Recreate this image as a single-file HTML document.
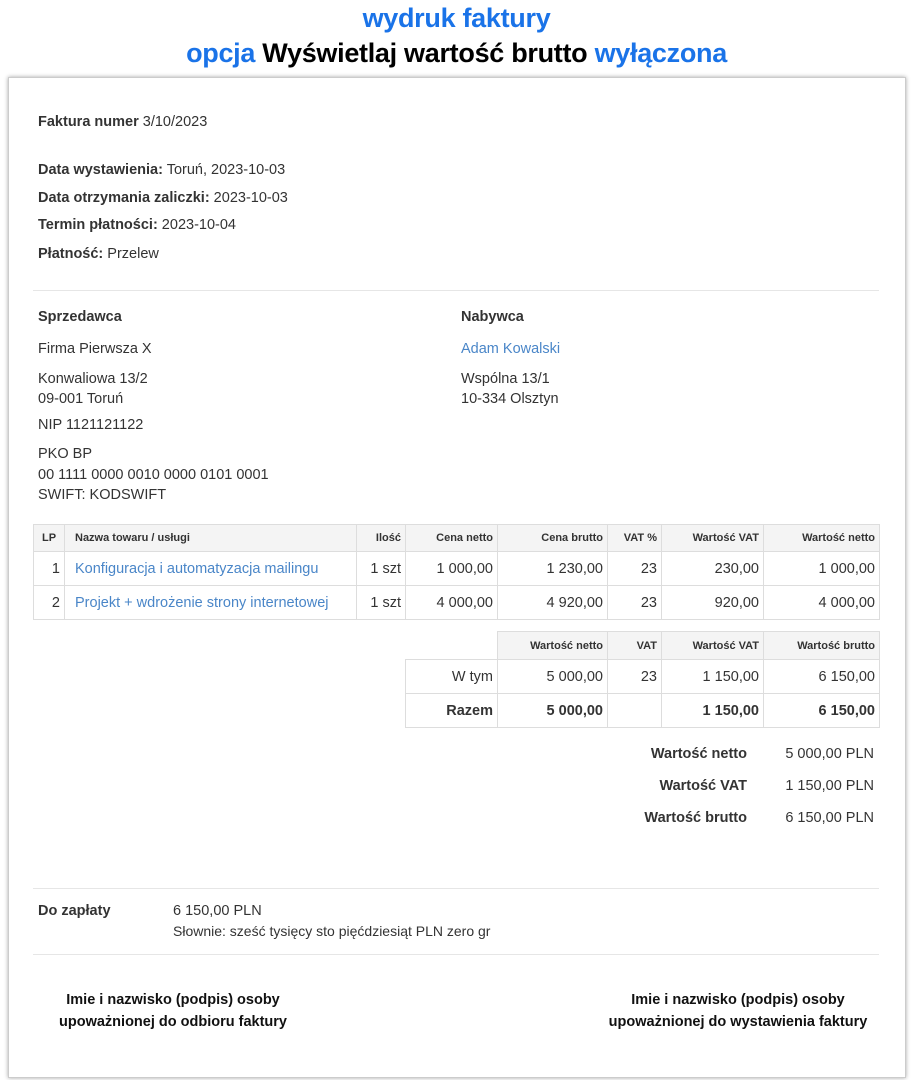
<!DOCTYPE html>
<html><head><meta charset="utf-8"><style>
*{margin:0;padding:0;box-sizing:border-box}
body{width:913px;height:1080px;background:#fff;font-family:"Liberation Sans",Arial,sans-serif;color:#333;font-size:14.5px;position:relative;overflow:hidden}
.t{position:absolute;white-space:nowrap}
.title{position:absolute;left:0;width:913px;text-align:center;font-weight:bold;font-size:27px;letter-spacing:-0.3px;color:#000}
.bl{color:#1a73e8}
.paper{position:absolute;left:8px;top:77px;width:898px;height:1001px;border:1px solid #ccc;box-shadow:0 0 4px rgba(0,0,0,.35);background:#fff}
b{font-weight:bold;color:#333}
.hr{position:absolute;left:33px;width:846px;height:1px;background:#e6e6e6}
table{position:absolute;border-collapse:collapse}
td,th{border:1px solid #ddd;padding:0 4px;text-align:right;font-size:14.5px}
th{background:#f4f4f4;font-size:11px;font-weight:bold;color:#333}
a{color:#4a86c8;text-decoration:none}
.sig{position:absolute;text-align:center;font-weight:bold;color:#111;line-height:22px;font-size:14.5px}
</style></head><body>
<div class="title bl" style="top:3px">wydruk faktury</div>
<div class="title" style="top:38px"><span class="bl">opcja</span> Wyświetlaj wartość brutto <span class="bl">wyłączona</span></div>
<div class="paper"></div>

<div class="t" style="left:38px;top:114px"><b>Faktura numer</b> 3/10/2023</div>
<div class="t" style="left:38px;top:162px"><b>Data wystawienia:</b> Toruń, 2023-10-03</div>
<div class="t" style="left:38px;top:190px"><b>Data otrzymania zaliczki:</b> 2023-10-03</div>
<div class="t" style="left:38px;top:217px"><b>Termin płatności:</b> 2023-10-04</div>
<div class="t" style="left:38px;top:246px"><b>Płatność:</b> Przelew</div>
<div class="hr" style="top:290px"></div>

<div class="t" style="left:38px;top:309px"><b>Sprzedawca</b></div>
<div class="t" style="left:38px;top:341px">Firma Pierwsza X</div>
<div class="t" style="left:38px;top:369px;line-height:20px">Konwaliowa 13/2<br>09-001 Toruń</div>
<div class="t" style="left:38px;top:417px">NIP 1121121122</div>
<div class="t" style="left:38px;top:444px;line-height:20.5px">PKO BP<br>00 1111 0000 0010 0000 0101 0001<br>SWIFT: KODSWIFT</div>

<div class="t" style="left:461px;top:309px"><b>Nabywca</b></div>
<div class="t" style="left:461px;top:341px"><a>Adam Kowalski</a></div>
<div class="t" style="left:461px;top:369px;line-height:20px">Wspólna 13/1<br>10-334 Olsztyn</div>

<table style="left:33px;top:524px;width:847px">
<tr style="height:27px"><th style="width:31px;text-align:center">LP</th><th style="width:292px;text-align:left;padding-left:10px">Nazwa towaru / usługi</th><th style="width:49px">Ilość</th><th style="width:92px">Cena netto</th><th style="width:110px">Cena brutto</th><th style="width:54px">VAT %</th><th style="width:102px">Wartość VAT</th><th>Wartość netto</th></tr>
<tr style="height:34px"><td>1</td><td style="text-align:left;padding-left:10px"><a>Konfiguracja i automatyzacja mailingu</a></td><td>1 szt</td><td>1 000,00</td><td>1 230,00</td><td>23</td><td>230,00</td><td>1 000,00</td></tr>
<tr style="height:34px"><td>2</td><td style="text-align:left;padding-left:10px"><a>Projekt + wdrożenie strony internetowej</a></td><td>1 szt</td><td>4 000,00</td><td>4 920,00</td><td>23</td><td>920,00</td><td>4 000,00</td></tr>
</table>

<table style="left:405px;top:631px;width:475px">
<tr style="height:28px"><td style="border:none;border-bottom:1px solid #ddd;width:92px"></td><th style="width:110px">Wartość netto</th><th style="width:54px">VAT</th><th style="width:102px">Wartość VAT</th><th>Wartość brutto</th></tr>
<tr style="height:34px"><td>W tym</td><td>5 000,00</td><td>23</td><td>1 150,00</td><td>6 150,00</td></tr>
<tr style="height:34px;font-weight:bold"><td><b>Razem</b></td><td><b>5 000,00</b></td><td></td><td><b>1 150,00</b></td><td><b>6 150,00</b></td></tr>
</table>

<div class="t" style="right:166px;top:746px"><b>Wartość netto</b></div>
<div class="t" style="right:39px;top:746px">5 000,00 PLN</div>
<div class="t" style="right:166px;top:778px"><b>Wartość VAT</b></div>
<div class="t" style="right:39px;top:778px">1 150,00 PLN</div>
<div class="t" style="right:166px;top:810px"><b>Wartość brutto</b></div>
<div class="t" style="right:39px;top:810px">6 150,00 PLN</div>

<div class="hr" style="top:888px"></div>
<div class="t" style="left:38px;top:903px"><b>Do zapłaty</b></div>
<div class="t" style="left:173px;top:903px">6 150,00 PLN</div>
<div class="t" style="left:173px;top:923px;font-size:14px">Słownie: sześć tysięcy sto pięćdziesiąt PLN zero gr</div>
<div class="hr" style="top:954px"></div>

<div class="sig" style="left:33px;width:280px;top:989px">Imie i nazwisko (podpis) osoby<br>upoważnionej do odbioru faktury</div>
<div class="sig" style="left:588px;width:300px;top:989px">Imie i nazwisko (podpis) osoby<br>upoważnionej do wystawienia faktury</div>
</body></html>
